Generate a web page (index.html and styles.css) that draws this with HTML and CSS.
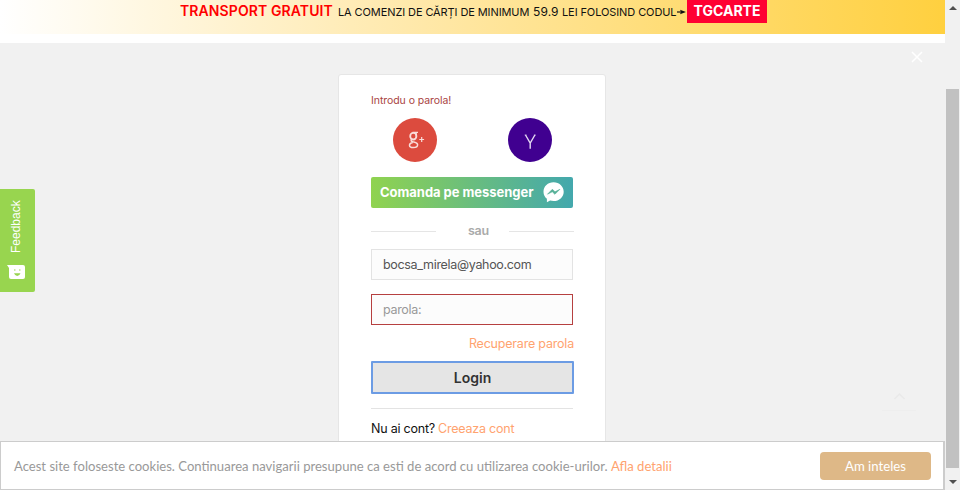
FILE: index.html
```html
<!DOCTYPE html>
<html lang="ro">
<head>
<meta charset="utf-8">
<title>Login</title>
<link rel="stylesheet" href="styles.css">
</head>
<body>
<div class="viewport">
  <div class="page">
    <header class="promo">
      <strong class="promo-title">TRANSPORT GRATUIT</strong>
      <span class="promo-text"><span class="promo-lead">LA COMENZI DE CĂRȚI DE MINIMUM</span><span class="amount">59.9</span><span class="promo-tail">LEI FOLOSIND CODUL</span></span>
      <svg class="arrow" width="9" height="8" viewBox="0 0 9 8"><path d="M0 4h5" stroke="#111" stroke-width="1.2"/><path d="M3 1.8L9 4L3 6.2L4 4z" fill="#111"/></svg>
      <strong class="code">TGCARTE</strong>
    </header>
    <main class="content">
      <section class="card">
        <p class="error">Introdu o parola!</p>
        <div class="socials">
          <a class="social google"><svg width="44" height="44" viewBox="0 0 44 44" fill="none" stroke="#f9dcd9"><ellipse cx="20.3" cy="18.2" rx="3.1" ry="3.3" stroke-width="1.8"/><path d="M19.500 14.400H25M23.300 15v4.500" stroke-width="1.1"/><path d="M19 21.200c-1.800 1.400-.8 2 1 2.600c3 .8 4.600 1.300 4.600 3c0 1.800-1.800 2.800-4.200 2.800c-2.300 0-3.900-.8-3.900-2.400c0-1.500 1.400-2.400 3.200-2.800" stroke-width="1.500"/><path d="M26.300 21.500h4.800M28.700 19.100v4.800" stroke-width="1.2"/></svg></a>
          <a class="social yahoo"><svg width="44" height="44" viewBox="0 0 44 44" fill="none" stroke="#e3d9f1" stroke-width="1.4"><path d="M17.500 17L22.200 25L26.900 17M22.200 24.600V30.700"/><path d="M16.700 17h1.800M25.900 17h1.800" stroke-width=".8"/></svg></a>
        </div>
        <a class="messenger"><span class="messenger-label">Comanda pe messenger</span><svg width="21" height="21" viewBox="0 0 21 21"><path d="M10.600.3C4.900.3.500 4.400.500 9.700c0 3 1.300 5.400 3.400 7.100v3.500l3.200-1.700c1.100.3 2.300.5 3.500.5 5.600 0 10.100-4.200 10.100-9.400S16.200.3 10.600.3z" fill="#fff"/><path d="M4.500 12.200L9.300 7.300L12 9.800L16.900 7.300L11.900 12.300L9.300 9.800z" fill="#55b097" stroke="#55b097" stroke-width=".6"/></svg></a>
        <div class="divider"><span class="or">sau</span></div>
        <div class="field"><span class="email">bocsa_mirela@yahoo.com</span></div>
        <div class="field invalid"><span class="placeholder">parola:</span></div>
        <div class="recover"><a class="recover-link">Recuperare parola</a></div>
        <button class="login"><span class="login-label">Login</span></button>
        <div class="signup"><span class="question">Nu ai cont?</span><a class="create">Creeaza cont</a></div>
      </section>
    </main>
  </div>
  <div class="scrollbar"><i class="up"></i><i class="thumb"></i><i class="down"></i></div>
</div>
<svg class="close" width="12" height="12" viewBox="0 0 12 12"><path d="M1 1L11 11M11 1L1 11" stroke="#fff" stroke-width="1.5"/></svg>
<svg class="to-top" width="34" height="22" viewBox="0 0 34 22" fill="none"><path d="M12.500 7l5-5 5 5" stroke="#e9e9e9" stroke-width="1.5"/><path d="M0 18.500h34" stroke="#eee"/></svg>
<aside class="feedback">
  <span class="feedback-label">Feedback</span>
  <svg width="19" height="15" viewBox="0 0 19 15"><path d="M0 0H16a2 2 0 0 1 2 2v10a2 2 0 0 1-2 2H4a2 2 0 0 1-2-2V3z" fill="#fff"/><path d="M7 5h1.500M12 5h1.500" stroke="#98d54f"/><path d="M7 8.300h6.500Q12.500 11 10.200 11Q8 11 7 8.300z" fill="#98d54f"/></svg>
</aside>
<div class="cookies"><p class="cookie-text"><span class="notice">Acest site foloseste cookies. Continuarea navigarii presupune ca esti de acord cu utilizarea cookie-urilor.</span><a class="details">Afla detalii</a></p><button class="accept"><span class="accept-label">Am inteles</span></button></div>
</body>
</html>
```
FILE: styles.css
```css
* { box-sizing: border-box; }
body { margin: 0; height: 490px; overflow: hidden; font: 13px/16px Inter, sans-serif; color: #111; white-space: nowrap; }
p { margin: 0; }
svg { display: block; flex: none; }
button { padding: 0; border: 0; }
.viewport { display: flex; height: 490px; }
.page { width: 945px; background: #fff; }
.promo { height: 34px; padding: 0 0 11px 180px; display: flex; align-items: center; background: linear-gradient(90deg, #fff 0, #ffe8a8 45%, #ffd03f 100%); }
.promo-title { width: 158px; padding-bottom: 1px; font-size: 14px; font-weight: 600; color: #f00; letter-spacing: .1px; }
.promo-text { display: flex; align-items: center; width: 339px; font-size: 11px; }
.promo-lead { width: 195px; letter-spacing: -.1px; }
.amount { width: 29px; font-size: 12px; letter-spacing: .1px; }
.promo-tail { letter-spacing: -.1px; }
.code { width: 80px; height: 23px; margin-left: 1px; background: #ff0032; color: #fff; font-size: 14px; line-height: 22px; text-align: center; }
.content { height: 447px; margin-top: 9px; padding-top: 31px; background: #f1f1f1; }
.card { width: 268px; height: 430px; margin-left: 338px; padding: 18px 32px; border: 1px solid #e6e6e6; border-radius: 3px; background: #fff; }
.error { height: 25px; font-size: 10.500px; color: #a94442; letter-spacing: -.06px; }
.socials { display: flex; gap: 71px; height: 59px; padding-left: 22px; }
.social { width: 44px; height: 44px; border-radius: 50%; }
.google { background: #dc4b3e; }
.yahoo { background: #400090; }
.messenger { display: flex; align-items: center; height: 31px; padding-left: 9px; border-radius: 2px; background: linear-gradient(90deg, #90d34f, #43a8ad); color: #fff; font-weight: 700; }
.messenger-label { width: 163px; padding-bottom: 1px; letter-spacing: -.04px; }
.divider { display: flex; align-items: center; width: 203px; height: 41px; padding-top: 5px; color: #aaa; font-weight: 600; font-size: 12.500px; }
.divider::before, .divider::after { content: ""; width: 65px; height: 1px; background: #e5e5e5; }
.or { width: 72px; padding-left: 13px; text-align: center; margin-right: 1px; letter-spacing: -.2px; }
.field { height: 31px; margin-bottom: 14px; padding-left: 11px; border: 1px solid #e3e3e3; background: #fcfcfc; color: #555; font-size: 12.500px; line-height: 29px; letter-spacing: -.32px; }
.invalid { border-color: #b64040; color: #999; }
.recover { display: flex; justify-content: flex-end; height: 24px; margin-top: -5px; padding-top: 2px; margin-right: -1px; font-size: 12.500px; letter-spacing: -.2px; }
.recover-link, .create { color: #ffa36f; }
.login { display: block; width: 203px; height: 33px; margin-top: 3px; border: 2px solid #6c9ce4; border-radius: 1px; background: #e5e5e5; color: #333; font: 600 14px/28px Inter, sans-serif; }
.signup { display: flex; margin-top: 14px; padding-top: 12px; border-top: 1px solid #e3e3e3; font-size: 12.500px; letter-spacing: -.22px; }
.question { width: 67px; }
.scrollbar { position: relative; width: 15px; padding: 89px 1px 0; background: #f1f1f1; }
.thumb { display: block; height: 379px; background: #c1c1c1; }
.up, .down { position: absolute; left: 4px; border: 4px solid transparent; }
.up { top: 2px; border-bottom-color: #505050; }
.down { bottom: 2px; border-top-color: #505050; }
.close { position: absolute; left: 911px; top: 51px; }
.to-top { position: absolute; left: 882px; top: 392px; }
.feedback { position: absolute; left: 0; top: 189px; width: 35px; height: 103px; padding: 10px 0 0 7px; border-radius: 0 2px 2px 0; background: #98d54f; color: #fff; }
.feedback-label { display: block; height: 54px; margin-bottom: 12px; writing-mode: vertical-rl; transform: rotate(180deg); font: 12px/19px "Liberation Sans", sans-serif; }
.cookies { position: absolute; left: 0; top: 441px; width: 945px; height: 49px; padding: 0 12px 0 13px; display: flex; align-items: center; justify-content: space-between; border: 1px solid #ccc; border-right-width: 2px; background: #fff; font-family: Lato, sans-serif; }
.cookie-text { display: flex; color: #999; font-size: 13.080px; }
.notice { width: 597px; }
.details { color: #ffa36f; }
.accept { width: 111px; height: 28px; border-radius: 4px; background: #deb887; color: #fff; font: 13.200px/28px Lato, sans-serif; }
```
